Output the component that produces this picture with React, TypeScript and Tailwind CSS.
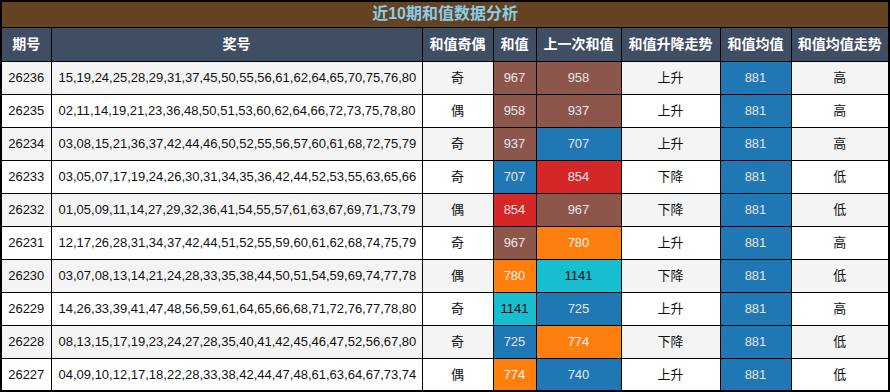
import React from 'react'

type Row = {
  qi: string
  nums: string
  oe: string
  sum: number
  prev: number
  trend: string
  avg: number
  avgTrend: string
}

const rows: Row[] = [
  { qi: '26236', nums: '15,19,24,25,28,29,31,37,45,50,55,56,61,62,64,65,70,75,76,80', oe: '奇', sum: 967, prev: 958, trend: '上升', avg: 881, avgTrend: '高' },
  { qi: '26235', nums: '02,11,14,19,21,23,36,48,50,51,53,60,62,64,66,72,73,75,78,80', oe: '偶', sum: 958, prev: 937, trend: '上升', avg: 881, avgTrend: '高' },
  { qi: '26234', nums: '03,08,15,21,36,37,42,44,46,50,52,55,56,57,60,61,68,72,75,79', oe: '奇', sum: 937, prev: 707, trend: '上升', avg: 881, avgTrend: '高' },
  { qi: '26233', nums: '03,05,07,17,19,24,26,30,31,34,35,36,42,44,52,53,55,63,65,66', oe: '奇', sum: 707, prev: 854, trend: '下降', avg: 881, avgTrend: '低' },
  { qi: '26232', nums: '01,05,09,11,14,27,29,32,36,41,54,55,57,61,63,67,69,71,73,79', oe: '偶', sum: 854, prev: 967, trend: '下降', avg: 881, avgTrend: '低' },
  { qi: '26231', nums: '12,17,26,28,31,34,37,42,44,51,52,55,59,60,61,62,68,74,75,79', oe: '奇', sum: 967, prev: 780, trend: '上升', avg: 881, avgTrend: '高' },
  { qi: '26230', nums: '03,07,08,13,14,21,24,28,33,35,38,44,50,51,54,59,69,74,77,78', oe: '偶', sum: 780, prev: 1141, trend: '下降', avg: 881, avgTrend: '低' },
  { qi: '26229', nums: '14,26,33,39,41,47,48,56,59,61,64,65,66,68,71,72,76,77,78,80', oe: '奇', sum: 1141, prev: 725, trend: '上升', avg: 881, avgTrend: '高' },
  { qi: '26228', nums: '08,13,15,17,19,23,24,27,28,35,40,41,42,45,46,47,52,56,67,80', oe: '奇', sum: 725, prev: 774, trend: '下降', avg: 881, avgTrend: '低' },
  { qi: '26227', nums: '04,09,10,12,17,18,22,28,33,38,42,44,47,48,61,63,64,67,73,74', oe: '偶', sum: 774, prev: 740, trend: '上升', avg: 881, avgTrend: '低' },
]

function cellColor(v: number) {
  if (v >= 1000) return 'bg-[#17becf] text-[#111]'
  if (v >= 900) return 'bg-[#8c564b] text-[#e6e6e6]'
  if (v >= 800) return 'bg-[#d62728] text-[#e6e6e6]'
  if (v >= 750) return 'bg-[#ff7f0e] text-[#f0f0f0]'
  return 'bg-[#1f77b4] text-[#e6e6e6]'
}

const headers = ['期号', '奖号', '和值奇偶', '和值', '上一次和值', '和值升降走势', '和值均值', '和值均值走势']
const widths = ['w-[50px]', 'w-[371px]', 'w-[71px]', 'w-[43px]', 'w-[85px]', 'w-[99px]', 'w-[71px]', 'w-[98px]']

export default function App() {
  return (
    <div className="w-[890px] h-[392px] bg-white font-['Liberation_Sans','Noto_Sans_CJK_SC',sans-serif]">
      <table className="w-[889px] table-fixed border-collapse border-2 border-black text-[13px]">
        <colgroup>
          {widths.map((w, i) => (
            <col key={i} className={w} />
          ))}
        </colgroup>
        <thead>
          <tr className="h-[26px]">
            <th colSpan={8} className="bg-[#654321] text-[#87ceeb] text-[16px] font-bold border border-black p-0">
              近10期和值数据分析
            </th>
          </tr>
          <tr className="h-[34px]">
            {headers.map((h) => (
              <th key={h} className="bg-[#3f4e63] text-white text-[14px] font-bold border border-black p-0">
                {h}
              </th>
            ))}
          </tr>
        </thead>
        <tbody>
          {rows.map((r, i) => (
            <tr key={r.qi} className={`h-[33px] ${i % 2 === 0 ? 'bg-[#f4f4f4]' : 'bg-white'} text-[#111]`}>
              <td className="border border-black text-center p-0">{r.qi}</td>
              <td className="border border-black text-left pl-[7px] p-0">{r.nums}</td>
              <td className="border border-black text-center p-0">{r.oe}</td>
              <td className={`border border-black text-center p-0 ${cellColor(r.sum)}`}>{r.sum}</td>
              <td className={`border border-black text-center p-0 ${cellColor(r.prev)}`}>{r.prev}</td>
              <td className="border border-black text-center p-0">{r.trend}</td>
              <td className="border border-black text-center p-0 bg-[#1f77b4] text-[#e6e6e6]">{r.avg}</td>
              <td className="border border-black text-center p-0">{r.avgTrend}</td>
            </tr>
          ))}
        </tbody>
      </table>
    </div>
  )
}
